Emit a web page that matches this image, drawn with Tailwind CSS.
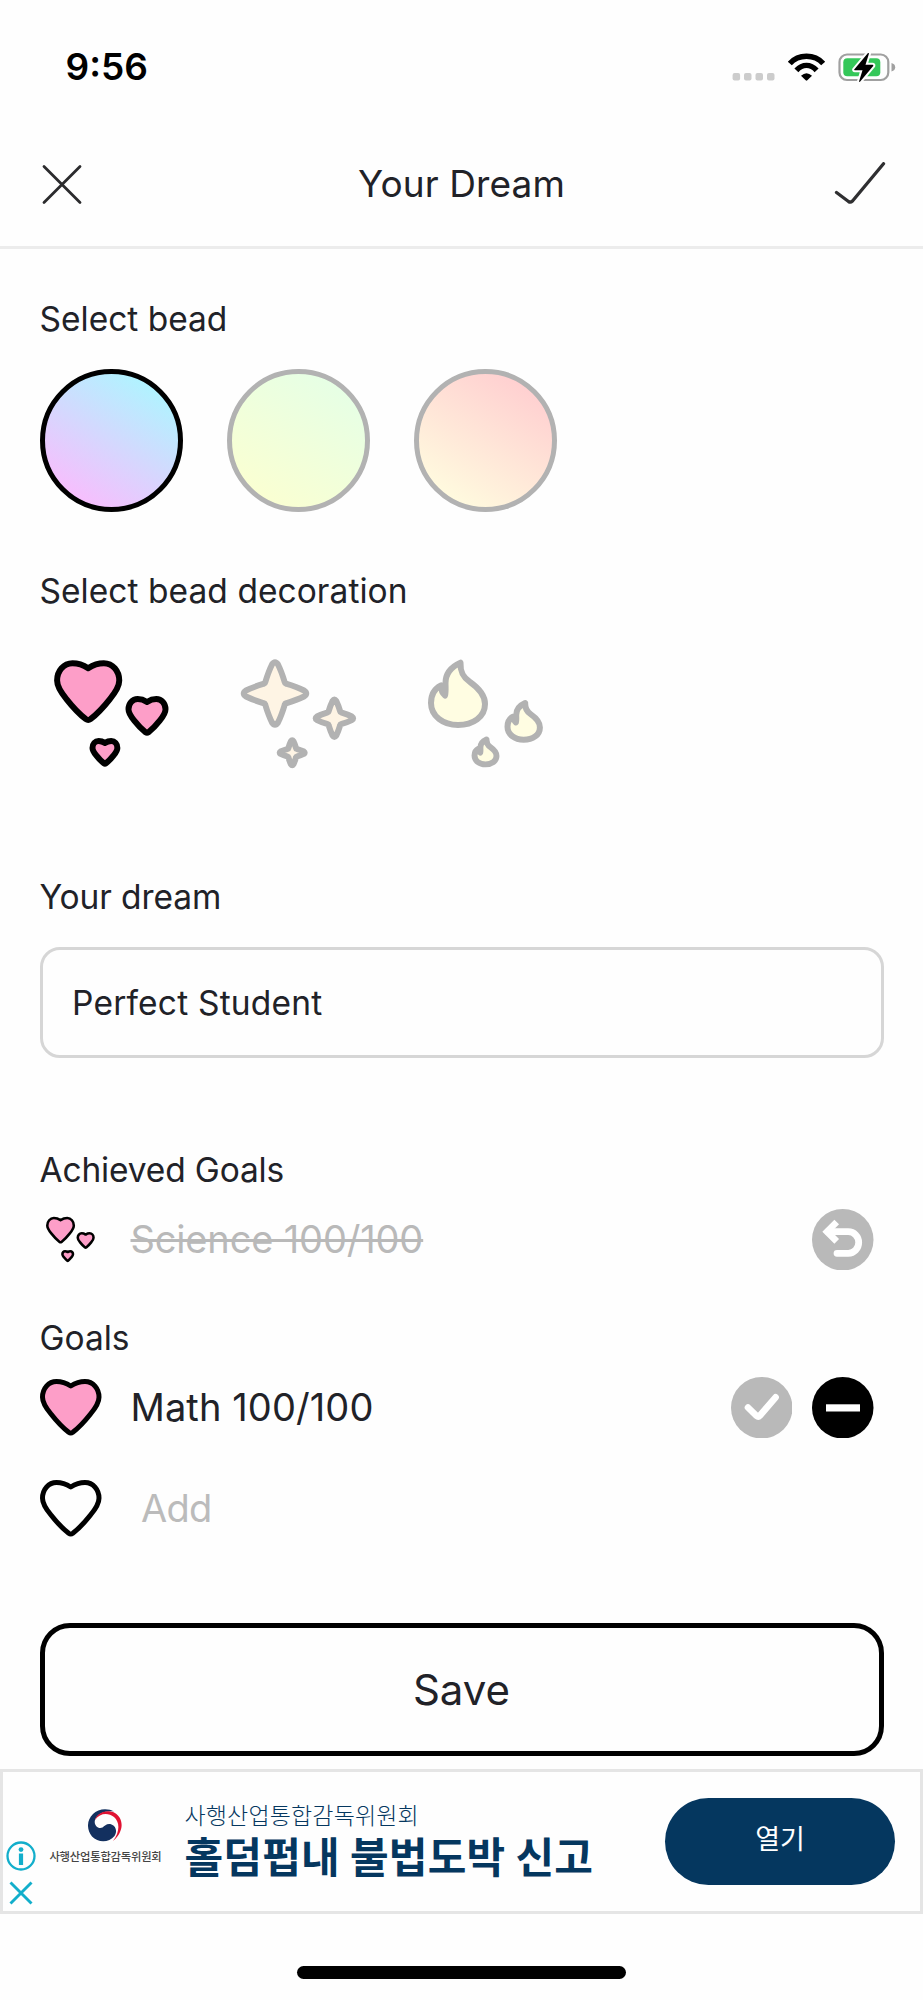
<!DOCTYPE html>
<html lang="en">
<head>
<meta charset="utf-8">
<title>Your Dream</title>
<script src="https://cdn.jsdelivr.net/npm/@tailwindcss/browser@4"></script>
</head>
<body class="bg-[#fefefe]">
<svg class="hidden">
  <defs>
    <path id="heart" d="M28.25 4.5C22.5 .8 17.5 0 14 0C6 0 0 7 0 15.7C0 21.5 3.5 26.5 8.5 32.500C14 39.500 20 46 26.200 50.800Q28.250 52.300 30.300 50.800C36.500 46 42.500 39.500 48 32.500C53 26.500 56.500 21.500 56.500 15.700C56.500 7 50.500 0 42.500 0C39 0 34 .8 28.250 4.500Z"/>
    <path id="star" d="M-3 -29Q0 -33.500 3 -29C6 -23 8 -17 9.800 -11Q10 -10 11 -9.800C17 -8 23 -6 29 -3Q33.500 0 29 3C23 6 17 8 11 9.800Q10 10 9.800 11C8 17 6 23 3 29Q0 33.500 -3 29C-6 23 -8 17 -9.800 11Q-10 10 -11 9.800C-17 8 -23 6 -29 3Q-33.500 0 -29 -3C-23 -6 -17 -8 -11 -9.800Q-10 -10 -9.800 -11C-8 -17 -6 -23 -3 -29Z"/>
    <path id="flame" d="M46.5 20.7C46 31 50 36 56 40C66 47 71 54 71 62C71 75 59 83 44 83C29 83 17 74 17 61C17 53 20 47 27 43.5C27 48 28 51 31 53.5C32 50 31.5 46 31.5 41C31.5 32 37 25 46.5 20.7Z"/>
    <symbol id="hearts" viewBox="0 0 143 143">
      <g fill="#fd9ec8" stroke="#000" stroke-linejoin="round">
        <use href="#heart" transform="translate(17.1 21.3) scale(1.1)" stroke-width="5.45"/>
        <use href="#heart" transform="translate(88.5 57) scale(.655)" stroke-width="9.1"/>
        <use href="#heart" transform="translate(52.5 99) scale(.44)" stroke-width="13.6"/>
      </g>
    </symbol>
  </defs>
</svg>
<div class="flex h-[2000px] w-[923px] flex-col overflow-hidden font-[Inter,'Noto_Sans_CJK_KR',sans-serif] text-[#212228]">
  <!-- status bar -->
  <div class="flex h-[124px] shrink-0 items-center justify-between pt-[10px] pr-[27px] pl-[65.5px] text-black">
    <span class="text-[37px] leading-[40px] font-semibold">9:56</span>
    <svg class="h-[32px] w-[164px]" viewBox="732 51 164 32">
      <g fill="#ccc"><rect x="732.6" y="73" width="7.5" height="7.5" rx="2"/><rect x="744" y="73" width="7.5" height="7.5" rx="2"/><rect x="755.5" y="73" width="7.5" height="7.5" rx="2"/><rect x="767" y="73" width="7.5" height="7.5" rx="2"/></g>
      <g fill="none" stroke="#000" stroke-width="5.4"><path d="M789.8 63.5C798.5 53.8 814.500 53.800 823.200 63.500"/><path d="M796.4 70.3C802.500 63.700 810.500 63.700 816.600 70.300"/></g>
      <path d="M801 75.800Q806.500 70.800 812 75.800L807.300 80.300Q806.500 81 805.700 80.300Z"/>
      <rect x="839.500" y="54.500" width="48.800" height="25.500" rx="7.500" fill="none" stroke="#a0a0a0" stroke-width="2.200"/>
      <path d="M891.500 63Q895.200 64 895.200 67.300T891.500 71.500Z" fill="#a0a0a0"/>
      <rect x="843.300" y="58.200" width="37" height="18" rx="4" fill="#34c759"/>
      <path d="M868 53L854.200 69.400Q853.900 70.200 854.800 70.200L862.500 70.200L859 81.500Q859.300 82.300 860.200 81.500L873.200 66Q873.700 64.800 872.500 64.800L865.500 64.800L869 53.500Q868.800 52.600 868 53Z" stroke="#fefefe" stroke-width="4" paint-order="stroke"/>
    </svg>
  </div>
  <!-- header -->
  <div class="flex h-[125px] shrink-0 items-center justify-between border-b-[3px] border-[#ececec] pr-[37px] pl-[41px]">
    <svg class="h-[44px] w-[50px]" viewBox="0 0 50 44" fill="none" stroke="#2b2b2d" stroke-width="2.800" stroke-linecap="round"><path d="M3 3.500L39 39.500M39 3.500L3 39.500"/></svg>
    <h1 class="pr-[2px] pb-[3px] text-[37px] leading-[44px] tracking-[0.1px]">Your Dream</h1>
    <svg class="h-[46px] w-[52px]" viewBox="834 162 52 46" fill="none" stroke="#2f2f31" stroke-width="3.300" stroke-linecap="round" stroke-linejoin="round"><path d="M836.500 192.500L848.500 201.500Q850.500 202.800 852.500 201L883.500 163.700"/></svg>
  </div>
  <main class="flex shrink-0 flex-col px-[39.5px] pt-[49.5px]">
    <h2 class="text-[33.5px] leading-[40px]">Select bead</h2>
    <div class="mt-[30.5px] flex gap-[44px]">
      <div class="h-[143px] w-[143px] rounded-full border-[5px] border-black bg-linear-[33deg] from-[#ffb8fd] from-5% to-[#a8f9ff] to-95%"></div>
      <div class="h-[143px] w-[143px] rounded-full border-[5px] border-[#b2b2b2] bg-linear-[33deg] from-[#fcffd0] from-5% to-[#e4ffe7] to-95%"></div>
      <div class="h-[143px] w-[143px] rounded-full border-[5px] border-[#b2b2b2] bg-linear-[33deg] from-[#ffffe0] from-5% to-[#ffcbcf] to-95%"></div>
    </div>
    <h2 class="mt-[59px] text-[33.5px] leading-[40px] tracking-[0.05px]">Select bead decoration</h2>
    <div class="mt-[31px] flex gap-[44px]">
      <svg class="h-[143px] w-[143px]"><use href="#hearts"/></svg>
      <svg class="h-[143px] w-[143px]" viewBox="0 0 143 143" fill="#fef4e4" stroke="#b2b2b2" stroke-linejoin="round">
        <use href="#star" transform="translate(48 51.5)" stroke-width="6"/>
        <use href="#star" transform="translate(107.4 76.300) scale(.6)" stroke-width="10"/>
        <use href="#star" transform="translate(65.200 110.700) scale(.4)" stroke-width="15"/>
      </svg>
      <svg class="h-[143px] w-[143px]" viewBox="0 0 143 143" fill="#fffde2" stroke="#b2b2b2" stroke-linejoin="round">
        <use href="#flame" stroke-width="6"/>
        <use href="#flame" transform="translate(83.300 48.800) scale(.6 .59)" stroke-width="10"/>
        <use href="#flame" transform="translate(53.600 89.200) scale(.407 .4)" stroke-width="14.500"/>
      </svg>
    </div>
    <h2 class="mt-[92px] text-[33.5px] leading-[40px] tracking-[-0.1px]">Your dream</h2>
    <div class="mt-[30px] flex h-[111px] items-center rounded-[20px] border-[3px] border-[#d6d6d6] pl-[29.5px] text-[33.5px] leading-[40px] tracking-[0.2px]">Perfect Student</div>
    <h2 class="mt-[91.5px] text-[33.5px] leading-[40px] tracking-[-0.15px]">Achieved Goals</h2>
    <div class="mt-[19.5px] flex h-[61px] items-center pr-[10px]">
      <svg class="h-[61px] w-[61px]"><use href="#hearts"/></svg>
      <span class="ml-[30px] pb-px text-[38px] leading-[44px] tracking-[-0.15px] text-[#b9b9b9] line-through decoration-[2.5px]">Science 100/100</span>
      <svg class="ml-auto h-[61.5px] w-[61.5px]" viewBox="0 0 61.500 61.500" fill="none" stroke="#fff"><circle cx="30.750" cy="30.750" r="30.750" fill="#b9b9b9" stroke="none"/><path d="M24.700 13L15 22.700L24.700 32.400" stroke-width="6.600"/><path d="M16 22.700H36.300A10.400 10.800 0 0 1 36.300 44.300H25" stroke-width="6.800" stroke-linecap="round"/></svg>
    </div>
    <h2 class="mt-[48px] text-[33.5px] leading-[40px]">Goals</h2>
    <div class="mt-[19px] flex h-[61px] items-center pr-[10px]">
      <svg class="h-[57px] w-[62px]" viewBox="-2.500 -2.500 62 57" fill="#fd9ec8" stroke="#000" stroke-width="5" stroke-linejoin="round"><use href="#heart"/></svg>
      <span class="ml-[29px] pb-px text-[38px] leading-[44px] tracking-[0.1px]">Math 100/100</span>
      <div class="ml-auto flex gap-[20px]">
        <svg class="h-[61.5px] w-[61.5px]" viewBox="0 0 61.500 61.500" fill="none"><circle cx="30.750" cy="30.750" r="30.750" fill="#b9b9b9"/><path d="M17 30.500L25.500 38.800Q27.300 40.300 29 38.500L44.600 20.300" stroke="#fff" stroke-width="6.600" stroke-linecap="round"/></svg>
        <svg class="h-[61.5px] w-[61.5px]" viewBox="0 0 61.500 61.500"><circle cx="30.750" cy="30.750" r="30.750"/><rect x="14" y="27.300" width="34" height="7.200" fill="#fff"/></svg>
      </div>
    </div>
    <div class="mt-[39.5px] flex h-[61px] items-center">
      <svg class="h-[57px] w-[62px]" viewBox="-2.500 -2.500 62 57" fill="none" stroke="#000" stroke-width="5" stroke-linejoin="round"><use href="#heart"/></svg>
      <span class="ml-[39.500px] text-[38px] leading-[44px] tracking-[-0.7px] text-[#bbb]">Add</span>
    </div>
    <div class="mt-[84.500px] flex h-[133px] items-center justify-center rounded-[30px] border-[5px] border-black text-[42px] leading-[50px]">Save</div>
  </main>
  <!-- banner -->
  <div class="mt-[13px] flex h-[145px] w-full shrink-0 items-center border-[3px] border-[#e5e5e5]">
    <div class="ml-[3px] flex w-[30px] flex-col items-center gap-[10px] pt-[63px]">
      <svg class="h-[30px] w-[30px]" viewBox="0 0 30 30" fill="none" stroke="#12aecb"><circle cx="15" cy="15" r="13.500" stroke-width="2.300"/><circle cx="15" cy="8.600" r="2.400" fill="#12aecb" stroke="none"/><path d="M15 12.500V24" stroke-width="4.200"/></svg>
      <svg class="h-[24px] w-[24px]" viewBox="0 0 24 24" fill="none" stroke="#12aecb" stroke-width="2.900"><path d="M1.500 1.500L22.500 22.500M22.500 1.500L1.500 22.500"/></svg>
    </div>
    <div class="ml-[12.5px] flex w-[114px] flex-col items-center pb-[8px]">
      <svg class="h-[34px] w-[36px]" viewBox="0 0 36 34"><path d="M26 2.500C20-1 10-.5 5 5C-1.500 11-1.500 21 4 27.500C10 34 21 34 26.500 27C29.500 22.500 28 17 23.500 15.500C19 14 17 17 14.500 18.500C10 20.500 5.500 16 7 11C9 5 17 1.500 26 2.500Z" fill="#13305f"/><path d="M7 11C9 4 18 .5 25 3C36 8 37 22 25 32C32 23 32 13 26 8C20 3.500 12 4 7 11Z" fill="#e01232"/></svg>
      <span class="mt-[5px] text-[11.3px] leading-[18px] font-medium tracking-[-0.2px] whitespace-nowrap text-[#444]">사행산업통합감독위원회</span>
    </div>
    <div class="ml-[22px] flex flex-col pt-[2px] whitespace-nowrap text-[#05375f]">
      <span class="text-[23px] leading-[30px] font-light tracking-[0.15px]">사행산업통합감독위원회</span>
      <span class="text-[42px] leading-[54px] font-bold tracking-[0.2px]">홀덤펍내 불법도박 신고</span>
    </div>
    <div class="mr-[25px] ml-auto flex h-[87px] w-[230px] items-center justify-center rounded-full bg-[#05375f] pb-[3px] text-[27px] leading-[34px] font-normal text-white">열기</div>
  </div>
  <div class="mt-[52px] h-[12.5px] w-[329px] shrink-0 self-center rounded-full bg-black"></div>
</div>
</body>
</html>
